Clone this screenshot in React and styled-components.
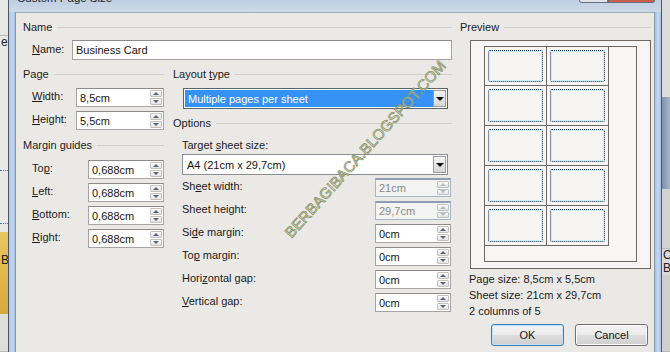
import styled, { createGlobalStyle } from "styled-components";

const GlobalStyle = createGlobalStyle`
  html, body {
    margin: 0;
    padding: 0;
  }
  body {
    width: 670px;
    height: 352px;
    overflow: hidden;
    background: #d9d9d9;
    font-family: "Liberation Sans", Arial, sans-serif;
    font-size: 11px;
    color: #1b1b1b;
  }
`;

const Screen = styled.div`
  display: flex;
  width: 670px;
  height: 352px;
  overflow: hidden;
`;

/* what is visible of the application behind the dialog */
const Behind = styled.div`
  width: 8px;
  flex: none;
  display: flex;
  flex-direction: column;
  overflow: hidden;
  background: ${(p) => p.$bg};
`;

const Scrap = styled.div`
  height: ${(p) => p.$h}px;
  flex: ${(p) => (p.$h ? "none" : "1")};
  background: ${(p) => p.$bg || "transparent"};
  border-top: ${(p) => p.$dotted ? "1px dotted #3d6fc4" : "none"};
  box-shadow: ${(p) => p.$edge ? "inset 0 -1px 0 #b9b9b9" : "none"};
  font-size: 12px;
  line-height: 13px;
  color: #222;
  white-space: nowrap;
  padding-left: ${(p) => p.$pad || 0}px;
  padding-top: ${(p) => p.$top || 0}px;
`;

const Window = styled.div`
  flex: 1;
  display: flex;
  flex-direction: column;
  border-left: 1px solid #4f5964;
  border-right: 1px solid #4f5964;
`;

const TitleBar = styled.div`
  height: 12px;
  flex: none;
  display: flex;
  align-items: flex-start;
  padding-left: 8px;
  overflow: hidden;
  background: linear-gradient(#bfcfe1, #ccd9e7);
`;

const TitleText = styled.span`
  font-size: 11.5px;
  line-height: 12px;
  margin-top: -8px;
  color: #1e1e1e;
`;

const CaptionButtons = styled.div`
  margin-left: auto;
  margin-right: 6px;
  display: flex;
`;

const CaptionButton = styled.div`
  width: ${(p) => p.$w}px;
  height: 2px;
  border: 1px solid #6a737d;
  border-top: none;
  border-radius: ${(p) => (p.$close ? "0 0 4px 0" : "0 0 0 4px")};
  background: ${(p) => (p.$close ? "#c8604c" : "#dfe4ea")};
`;

const Body = styled.div`
  flex: 1;
  display: flex;
`;

const FrameSide = styled.div`
  width: 6px;
  flex: none;
  background: linear-gradient(to right, #a7c3e8, #c3d8f2 50%, #a7c3e8);
  border-right: ${(p) => (p.$left ? "1px solid #8a96a3" : "none")};
  border-left: ${(p) => (p.$left ? "none" : "1px solid #8a96a3")};
`;

const Client = styled.div`
  flex: 1;
  position: relative;
  display: flex;
  padding: 8px 0 0 7px;
  border-top: 1px solid #a3adb8;
  background: #ebe9e6;
  overflow: hidden;
`;

const LeftPane = styled.div`
  width: 429px;
  flex: none;
  display: flex;
  flex-direction: column;
`;

const Columns = styled.div`
  display: flex;
  gap: 9px;
  margin-top: 8px;
`;

const Column = styled.div`
  width: ${(p) => p.$w}px;
  flex: none;
  display: flex;
  flex-direction: column;
`;

const GroupHeader = styled.div`
  display: flex;
  align-items: center;
  gap: 5px;
  height: 13px;
  line-height: 13px;
  margin-top: ${(p) => p.$mt || 0}px;
  white-space: nowrap;

  &::after {
    content: "";
    flex: 1;
    height: 1px;
    background: #d2cfca;
  }
`;

const Key = styled.u`
  text-decoration: underline;
  text-underline-offset: 1px;
`;

const FieldRow = styled.div`
  display: flex;
  align-items: center;
  margin-top: ${(p) => p.$mt ?? 4}px;
`;

const FieldLabel = styled.span`
  width: ${(p) => p.$w}px;
  flex: none;
  box-sizing: border-box;
  padding-left: 9px;
  padding-bottom: 3px;
  white-space: nowrap;
`;

const TextField = styled.div`
  display: flex;
  box-sizing: border-box;
  width: ${(p) => (p.$w ? `${p.$w}px` : "auto")};
  flex: ${(p) => (p.$w ? "none" : "1")};
  height: ${(p) => p.$h || 19}px;
  border: 1px solid ${(p) => (p.$disabled ? "#a8b5c7" : "#a4a4a4")};
  border-top: ${(p) => (p.$disabled ? "2px solid #8e9db3" : "1px solid #8c8c8c")};
  background: ${(p) => (p.$disabled ? "#f3f3f3" : "#ffffff")};
`;

const FieldValue = styled.span`
  flex: 1;
  display: flex;
  align-items: center;
  padding-left: 3px;
  color: ${(p) => (p.$disabled ? "#8a8a8a" : "#151515")};
  white-space: nowrap;
`;

const Spin = styled.div`
  width: 14px;
  flex: none;
  display: flex;
  flex-direction: column;
  gap: 1px;
  padding: 1px;
  box-sizing: border-box;
`;

const SpinHalf = styled.div`
  flex: 1;
  display: flex;
  align-items: center;
  justify-content: center;
  border: 1px solid #c2c2c2;
  border-radius: 1px;
  background: linear-gradient(#fbfbfb, #e2e2e2);

  &::after {
    content: "";
    border-left: 3px solid transparent;
    border-right: 3px solid transparent;
    ${(p) => (p.$down ? "border-top" : "border-bottom")}: 3px solid
      ${(p) => (p.$disabled ? "#b5bcc6" : "#56647a")};
  }
`;

const Combo = styled.div`
  display: flex;
  box-sizing: border-box;
  height: 21px;
  margin: ${(p) => p.$m};
  padding: 1px;
  border: 1px solid ${(p) => (p.$focus ? "#5d6168" : "#8a8e96")};
  background: #ffffff;
`;

const ComboText = styled.span`
  flex: 1;
  display: flex;
  align-items: center;
  padding-left: 3px;
  background: ${(p) => (p.$selected ? "#3592f4" : "transparent")};
  color: ${(p) => (p.$selected ? "#ffffff" : "#151515")};
  white-space: nowrap;
`;

const ComboArrow = styled.span`
  width: 11px;
  flex: none;
  display: flex;
  align-items: center;
  justify-content: center;
  border: 1px solid #9c9c9c;
  background: linear-gradient(#f4f4f4, #d6d6d6);

  &::after {
    content: "";
    border-left: 4px solid transparent;
    border-right: 4px solid transparent;
    border-top: 4px solid #111;
  }
`;

const SubLabel = styled.div`
  height: 13px;
  line-height: 13px;
  padding-left: 9px;
  margin-top: 9px;
`;

const OptionRow = styled.div`
  display: flex;
  align-items: center;
  justify-content: space-between;
  padding: 0 1px 0 9px;
  margin-top: ${(p) => p.$mt ?? 4}px;
`;

const OptionLabel = styled.span`
  padding-bottom: 3px;
  white-space: nowrap;
`;

const PreviewPane = styled.div`
  width: 191px;
  flex: none;
  margin-left: 8px;
  display: flex;
  flex-direction: column;
`;

const PreviewBox = styled.div`
  width: 181px;
  height: 229px;
  box-sizing: border-box;
  margin: 6px 0 0 10px;
  padding: 5px 0 0 13px;
  border: 1px solid #6e6762;
  background: #f7f6f4;
`;

const Sheet = styled.div`
  width: 153px;
  height: 216px;
  box-sizing: border-box;
  border: 1px solid #6e6762;
  display: grid;
  grid-template-columns: repeat(2, 62px);
  grid-template-rows: 39px repeat(4, 40px);
  align-content: start;
`;

const Cell = styled.div`
  box-sizing: border-box;
  padding: 3px;
  border-right: 1px solid #6e6762;
  border-bottom: 1px solid #6e6762;
`;

const Card = styled.div`
  height: 100%;
  box-sizing: border-box;
  border: 1px dotted #0f2a55;
  border-radius: 2px;
  box-shadow: inset 0 0 0 1px #c6f1fc;
  background: #f6f5f3;
`;

const InfoText = styled.div`
  margin: 2px 0 0 9px;
  line-height: 16px;
  white-space: nowrap;
`;

const ButtonRow = styled.div`
  display: flex;
  justify-content: flex-end;
  gap: 11px;
  margin-top: 5px;
  padding-right: 3px;
`;

const Button = styled.button`
  width: 73px;
  height: 22px;
  padding: 0;
  font: inherit;
  color: #151515;
  border-radius: 3px;
  border: 1px solid ${(p) => (p.$default ? "#3c7fb1" : "#707070")};
  box-shadow: inset 0 0 0 1px ${(p) => (p.$default ? "#bfe3f8" : "#fbfbfb")};
  background: linear-gradient(#f3f3f3 0%, #ebebeb 48%, #dddddd 52%, #cfcfcf 100%);
`;

const Watermark = styled.span`
  position: absolute;
  left: 349px;
  top: 136px;
  transform: translate(-50%, -50%) rotate(-48deg);
  font-size: 15px;
  line-height: 15px;
  white-space: nowrap;
  color: rgba(246, 246, 240, 0.6);
  -webkit-text-stroke: 0.8px #8a9468;
  pointer-events: none;
`;

const pageFields = [
  { label: <><Key>W</Key>idth:</>, value: "8,5cm" },
  { label: <><Key>H</Key>eight:</>, value: "5,5cm" },
];

const marginFields = [
  { label: <>To<Key>p</Key>:</>, value: "0,688cm" },
  { label: <><Key>L</Key>eft:</>, value: "0,688cm" },
  { label: <><Key>B</Key>ottom:</>, value: "0,688cm" },
  { label: <><Key>R</Key>ight:</>, value: "0,688cm" },
];

const options = [
  { label: <>Sh<Key>e</Key>et width:</>, value: "21cm", disabled: true },
  { label: <>Sheet hei<Key>g</Key>ht:</>, value: "29,7cm", disabled: true },
  { label: <>Si<Key>d</Key>e margin:</>, value: "0cm" },
  { label: <>To<Key>p</Key> margin:</>, value: "0cm" },
  { label: <>Hori<Key>z</Key>ontal gap:</>, value: "0cm" },
  { label: <><Key>V</Key>ertical gap:</>, value: "0cm" },
];

const SpinField = ({ value, width, disabled }) => (
  <TextField $w={width} $disabled={disabled}>
    <FieldValue $disabled={disabled}>{value}</FieldValue>
    <Spin>
      <SpinHalf $disabled={disabled} />
      <SpinHalf $down $disabled={disabled} />
    </Spin>
  </TextField>
);

const App = () => {
  return (
    <>
      <GlobalStyle />
      <Screen>
        <Behind $bg="#e7e7e5">
          <Scrap $h={36} $edge />
          <Scrap $h={134} $pad={1}>e</Scrap>
          <Scrap $h={52} $dotted />
          <Scrap $h={8} $dotted />
          <Scrap $h={60} $bg="linear-gradient(#e9c75e, #d8a93c)" $pad={1} $top={22}>
            B
          </Scrap>
          <Scrap $edge $bg="#dededc" />
        </Behind>

        <Window>
          <TitleBar>
            <TitleText>Custom Page Size</TitleText>
            <CaptionButtons>
              <CaptionButton $w={27} />
              <CaptionButton $w={45} $close />
            </CaptionButtons>
          </TitleBar>

          <Body>
            <FrameSide $left />
            <Client>
              <LeftPane>
                <GroupHeader>Name</GroupHeader>
                <FieldRow $mt={6}>
                  <FieldLabel $w={49}>
                    <Key>N</Key>ame:
                  </FieldLabel>
                  <TextField $h={20}>
                    <FieldValue>Business Card</FieldValue>
                  </TextField>
                </FieldRow>

                <Columns>
                  <Column $w={141}>
                    <GroupHeader>Page</GroupHeader>
                    {pageFields.map((f, i) => (
                      <FieldRow key={i} $mt={i === 0 ? 7 : 4}>
                        <FieldLabel $w={53}>{f.label}</FieldLabel>
                        <SpinField value={f.value} width={88} />
                      </FieldRow>
                    ))}

                    <GroupHeader $mt={9}>Margin guides</GroupHeader>
                    {marginFields.map((f, i) => (
                      <FieldRow key={i} $mt={i === 0 ? 8 : 4}>
                        <FieldLabel $w={65}>{f.label}</FieldLabel>
                        <SpinField value={f.value} width={76} />
                      </FieldRow>
                    ))}
                  </Column>

                  <Column $w={279}>
                    <GroupHeader>
                      <span>
                        Layout <Key>t</Key>ype
                      </span>
                    </GroupHeader>
                    <Combo $m="7px 4px 0 10px" $focus>
                      <ComboText $selected>Multiple pages per sheet</ComboText>
                      <ComboArrow />
                    </Combo>

                    <GroupHeader $mt={8}>Options</GroupHeader>
                    <SubLabel>
                      Target <Key>s</Key>heet size:
                    </SubLabel>
                    <Combo $m="2px 4px 0 9px">
                      <ComboText>A4 (21cm x 29,7cm)</ComboText>
                      <ComboArrow />
                    </Combo>

                    {options.map((o, i) => (
                      <OptionRow key={i} $mt={i === 0 ? 3 : 4}>
                        <OptionLabel>{o.label}</OptionLabel>
                        <SpinField value={o.value} width={76} disabled={o.disabled} />
                      </OptionRow>
                    ))}
                  </Column>
                </Columns>
              </LeftPane>

              <PreviewPane>
                <GroupHeader>Preview</GroupHeader>
                <PreviewBox>
                  <Sheet>
                    {Array.from({ length: 10 }).map((_, i) => (
                      <Cell key={i}>
                        <Card />
                      </Cell>
                    ))}
                  </Sheet>
                </PreviewBox>
                <InfoText>
                  Page size: 8,5cm x 5,5cm
                  <br />
                  Sheet size: 21cm x 29,7cm
                  <br />2 columns of 5
                </InfoText>
                <ButtonRow>
                  <Button $default>OK</Button>
                  <Button>Cancel</Button>
                </ButtonRow>
              </PreviewPane>

              <Watermark>BERBAGIBACA.BLOGSPOT.COM</Watermark>
            </Client>
            <FrameSide />
          </Body>
        </Window>

        <Behind $bg="#d4d4d4">
          <Scrap $h={97} $bg="#dcdcdc" />
          <Scrap $h={92} $bg="linear-gradient(to right, #7f90a8, #a8b6c9)" />
          <Scrap $h={60} $edge $bg="#d2d2d2" />
          <Scrap $h={26} $bg="#dadada" $pad={1}>
            C<br />B'
          </Scrap>
          <Scrap $edge $bg="#cfcfcf" />
        </Behind>
      </Screen>
    </>
  );
};

export default App;
